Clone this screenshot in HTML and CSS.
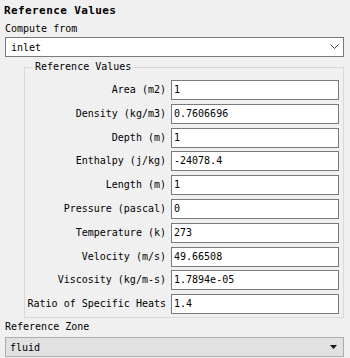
FILE: index.html
```html
<html>
<head>
	<title>Reference Values</title>
	<link rel="stylesheet" href="styles.css">
</head>
<body>

<div class="title">Reference Values</div>
<div class="label">Compute from</div>
<div class="combo edit">
	<span>inlet</span>
	<svg width="9" height="6" viewBox="0 0 9 6"><polyline points="0.5,0.5 4.5,4.5 8.5,0.5" fill="none" stroke="#444" stroke-width="1"/></svg>
</div>

<fieldset class="group">
	<legend>Reference Values</legend>
	<div class="rows">
		<div class="name">Area (m2)</div><div class="field">1</div>
		<div class="name">Density (kg/m3)</div><div class="field">0.7606696</div>
		<div class="name">Depth (m)</div><div class="field">1</div>
		<div class="name">Enthalpy (j/kg)</div><div class="field">-24078.4</div>
		<div class="name">Length (m)</div><div class="field">1</div>
		<div class="name">Pressure (pascal)</div><div class="field">0</div>
		<div class="name">Temperature (k)</div><div class="field">273</div>
		<div class="name">Velocity (m/s)</div><div class="field">49.66508</div>
		<div class="name">Viscosity (kg/m-s)</div><div class="field">1.7894e-05</div>
		<div class="name">Ratio of Specific Heats</div><div class="field">1.4</div>
	</div>
</fieldset>

<div class="label zone">Reference Zone</div>
<div class="combo plain">
	<span>fluid</span>
	<svg width="8" height="5" viewBox="0 0 8 5"><polygon points="0,0 7,0 3.5,4" fill="#111"/></svg>
</div>

</body>
</html>
```

FILE: styles.css
```css
body {
	margin: 0;
	padding: 4px 6px 0 5px;
	background-color: #f0f0f0;
	color: #000;
	font-family: "DejaVu Sans Mono", monospace;
	font-size: 10px;
}
.title {
	height: 14px;
	line-height: 14px;
	font-size: 11px;
	font-weight: bold;
	letter-spacing: 0.4px;
	margin-left: -1px;
}
.label {
	height: 14px;
	line-height: 14px;
	margin-top: 4px;
}
.combo {
	margin-top: 1px;
	height: 20px;
	box-sizing: border-box;
	display: flex;
	align-items: center;
	justify-content: space-between;
}
.combo.edit {
	background-color: #fff;
	border: 1px solid #7a7a7a;
	padding: 0 4px 0 5px;
}
.combo.plain {
	margin-top: 3px;
	background-color: #e1e1e1;
	border: 1px solid #adadad;
	padding: 0 5px 0 4px;
}
.group {
	margin: 3px 0 0 19px;
	padding: 0 4px 3px 0;
	border: 1px solid #d9d9d9;
	min-width: 0;
}
.group legend {
	margin-left: 8px;
	padding: 0 2px;
	line-height: 14px;
	height: 14px;
}
.rows {
	margin-top: 6px;
	display: grid;
	grid-template-columns: 141px 168px;
	column-gap: 5px;
	row-gap: 3.8px;
}
.name {
	text-align: right;
	line-height: 20px;
	white-space: nowrap;
}
.field {
	height: 20px;
	box-sizing: border-box;
	line-height: 18px;
	background-color: #fff;
	border: 1px solid #7a7a7a;
	padding-left: 2px;
}
.label.zone {
	margin-top: 2px;
}
```
